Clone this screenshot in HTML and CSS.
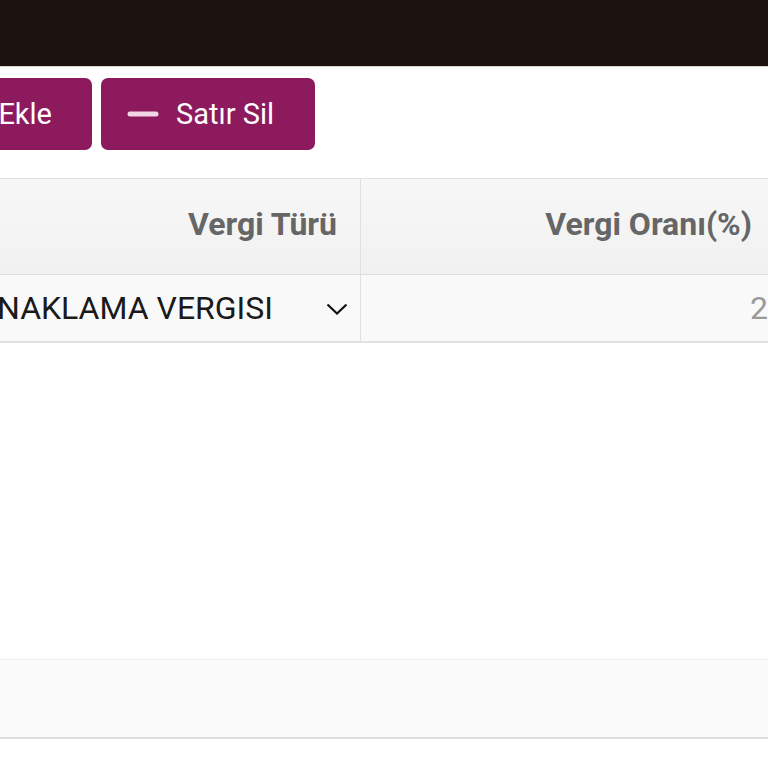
FILE: index.html
```html
<!DOCTYPE html>
<html lang="tr">
<head>
<meta charset="utf-8">
<link rel="stylesheet" href="styles.css">
</head>
<body>
<div class="page">
  <div class="topbar"></div>
  <div class="toolbar">
    <button class="btn btn-add">
      <svg class="ico" width="32" height="32" viewBox="0 0 32 32"><path d="M3 16h26M16 3v26" stroke="#f3d6e6" stroke-width="5" stroke-linecap="round"/></svg>
      <span>Satır Ekle</span>
    </button>
    <button class="btn btn-del">
      <svg class="ico" width="32" height="6" viewBox="0 0 32 6"><path d="M3 3h26" stroke="#f3d6e6" stroke-width="5" stroke-linecap="round"/></svg>
      <span>Satır Sil</span>
    </button>
  </div>
  <div class="table">
    <div class="row head">
      <div class="cell c1">Vergi Türü</div>
      <div class="cell c2">Vergi Oranı(%)</div>
    </div>
    <div class="row body">
      <div class="cell c1 sel">
        <span class="val">KONAKLAMA VERGISI</span>
        <svg class="chev" width="22" height="12" viewBox="0 0 22 12"><path d="M1.5 1.5l9.5 9 9.5-9" fill="none" stroke="#111" stroke-width="2.2"/></svg>
      </div>
      <div class="cell c2 num">2</div>
    </div>
  </div>
  <div class="footer"></div>
</div>
</body>
</html>
```
FILE: styles.css
```css
html, body {
  margin: 0;
  padding: 0;
  background: #fff;
  overflow: hidden;
}
.page {
  width: 768px;
  height: 768px;
  overflow: hidden;
  font-family: Roboto, "Liberation Sans", sans-serif;
}
.topbar {
  height: 66px;
  background: #1c1210;
  border-bottom: 1px solid #d4d4d4;
}
.toolbar {
  display: flex;
  gap: 9px;
  margin-top: 11px;
  margin-left: -148px;
  height: 72px;
}
.btn {
  display: flex;
  align-items: center;
  height: 72px;
  border: none;
  border-radius: 7px;
  background: #8c1a5d;
  color: #fff;
  font-family: Roboto, "Liberation Sans", sans-serif;
  font-size: 29px;
  padding: 0;
  box-sizing: border-box;
}
.btn-add {
  width: 240px;
  justify-content: flex-end;
  padding-right: 40px;
  gap: 17px;
}
.btn-del {
  width: 214px;
  padding-left: 26px;
  gap: 17px;
}
.ico { flex: none; }
.table {
  margin-top: 28px;
  margin-right: -8px;
  border-top: 1px solid #e2e2e2;
}
.row {
  display: flex;
}
.head {
  height: 95px;
  background: linear-gradient(#f7f7f7, #f1f1f1);
  border-bottom: 1px solid #dedede;
}
.body {
  height: 66px;
  background: #f9f9f9;
  border-bottom: 2px solid #e2e2e2;
}
.cell {
  display: flex;
  align-items: center;
  box-sizing: border-box;
}
.c1 {
  flex: 0 0 361px;
  border-right: 1px solid #e0e0e0;
  justify-content: flex-end;
}
.c2 {
  flex: 1;
  justify-content: flex-end;
}
.head .cell {
  font-weight: 700;
  font-size: 32px;
  color: #666;
  padding-bottom: 6px;
}
.head .c1 { padding-right: 23px; }
.head .c2 { padding-right: 24px; }
.sel {
  font-size: 32px;
  color: #1a1a1a;
  padding-right: 12px;
  gap: 53px;
  white-space: nowrap;
  overflow: hidden;
}
.chev { flex: none; margin-top: 2px; }
.num {
  font-size: 32px;
  color: #9a9a9a;
  padding-right: 8px;
}
.footer {
  margin-top: 316px;
  height: 77px;
  background: #fbfbfb;
  border-top: 1px solid #efefef;
  border-bottom: 2px solid #dcdcdc;
}
```
